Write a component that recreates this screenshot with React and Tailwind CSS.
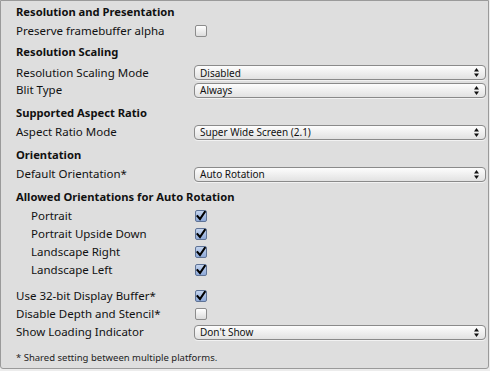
import React from 'react';

const font = { fontFamily: '"Noto Sans", "DejaVu Sans", sans-serif' };

const Arrows = () => (
  <svg width="5" height="9" viewBox="0 0 5 9" className="shrink-0">
    <path d="M2.5 0 L5 3.5 L0 3.5 Z" fill="#111" />
    <path d="M2.5 9 L5 5.5 L0 5.5 Z" fill="#111" />
  </svg>
);

const Dropdown = ({ value }) => (
  <div className="flex h-[15px] w-[292px] items-center justify-between rounded-[4px] border border-[#8a8a8a] bg-gradient-to-b from-[#fdfdfd] to-[#e2e2e2] pl-[5px] pr-[6px] shadow-[0_1px_0_rgba(255,255,255,0.6)]">
    <span className="text-[10px] leading-none text-[#111]">{value}</span>
    <Arrows />
  </div>
);

const Checkbox = ({ checked }) =>
  checked ? (
    <div className="ml-[1px] flex h-[12px] w-[12px] items-center justify-center rounded-[2px] border border-[#5f7396] bg-gradient-to-b from-[#c4d4ee] to-[#8ea9d8]">
      <svg width="10" height="10" viewBox="0 0 10 10">
        <path d="M1.5 5.2 L4 8 L8.8 1" fill="none" stroke="#000" strokeWidth="2.1" strokeLinecap="square" />
      </svg>
    </div>
  ) : (
    <div className="ml-[1px] h-[12px] w-[12px] rounded-[2px] border border-[#8c8c8c] bg-gradient-to-b from-[#ffffff] to-[#dcdcdc]" />
  );

const Row = ({ label, indent, children, className = '' }) => (
  <div className={`flex h-[18px] items-center ${className}`}>
    <div className={`${indent ? 'pl-[15px]' : ''} w-[178px] shrink-0 text-[11.5px] text-[#111]`}>
      {label}
    </div>
    {children}
  </div>
);

const Header = ({ children, className = '' }) => (
  <div className={`flex h-[18px] items-center text-[11.2px] font-bold text-[#111] ${className}`}>
    {children}
  </div>
);

export default function App() {
  return (
    <div className="h-[371px] w-[490px] bg-[#ececec]" style={font}>
      <div className="flex h-[369px] w-[489px] flex-col rounded-b-[3px] border border-[#9a9a9a] bg-[#dedede] pl-[15px] pt-[2px]">
        <Header>Resolution and Presentation</Header>
        <Row label="Preserve framebuffer alpha" className="mt-[1px]">
          <Checkbox />
        </Row>

        <Header className="mt-[3px]">Resolution Scaling</Header>
        <Row label="Resolution Scaling Mode" className="mt-[3px] !h-[17px]">
          <Dropdown value="Disabled" />
        </Row>
        <Row label="Blit Type">
          <Dropdown value="Always" />
        </Row>

        <Header className="mt-[5px]">Supported Aspect Ratio</Header>
        <Row label="Aspect Ratio Mode" className="mt-[1px]">
          <Dropdown value="Super Wide Screen (2.1)" />
        </Row>

        <Header className="mt-[5px]">Orientation</Header>
        <Row label="Default Orientation*" className="mt-[1px]">
          <Dropdown value="Auto Rotation" />
        </Row>

        <Header className="mt-[5px]">Allowed Orientations for Auto Rotation</Header>
        <Row label="Portrait" indent className="mt-[1px]">
          <Checkbox checked />
        </Row>
        <Row label="Portrait Upside Down" indent>
          <Checkbox checked />
        </Row>
        <Row label="Landscape Right" indent>
          <Checkbox checked />
        </Row>
        <Row label="Landscape Left" indent>
          <Checkbox checked />
        </Row>

        <Row label="Use 32-bit Display Buffer*" className="mt-[8px]">
          <Checkbox checked />
        </Row>
        <Row label="Disable Depth and Stencil*">
          <Checkbox />
        </Row>
        <Row label="Show Loading Indicator">
          <Dropdown value="Don't Show" />
        </Row>

        <div className="mt-[8px] flex h-[18px] items-center text-[9.5px] text-[#222]">
          * Shared setting between multiple platforms.
        </div>
      </div>
    </div>
  );
}
